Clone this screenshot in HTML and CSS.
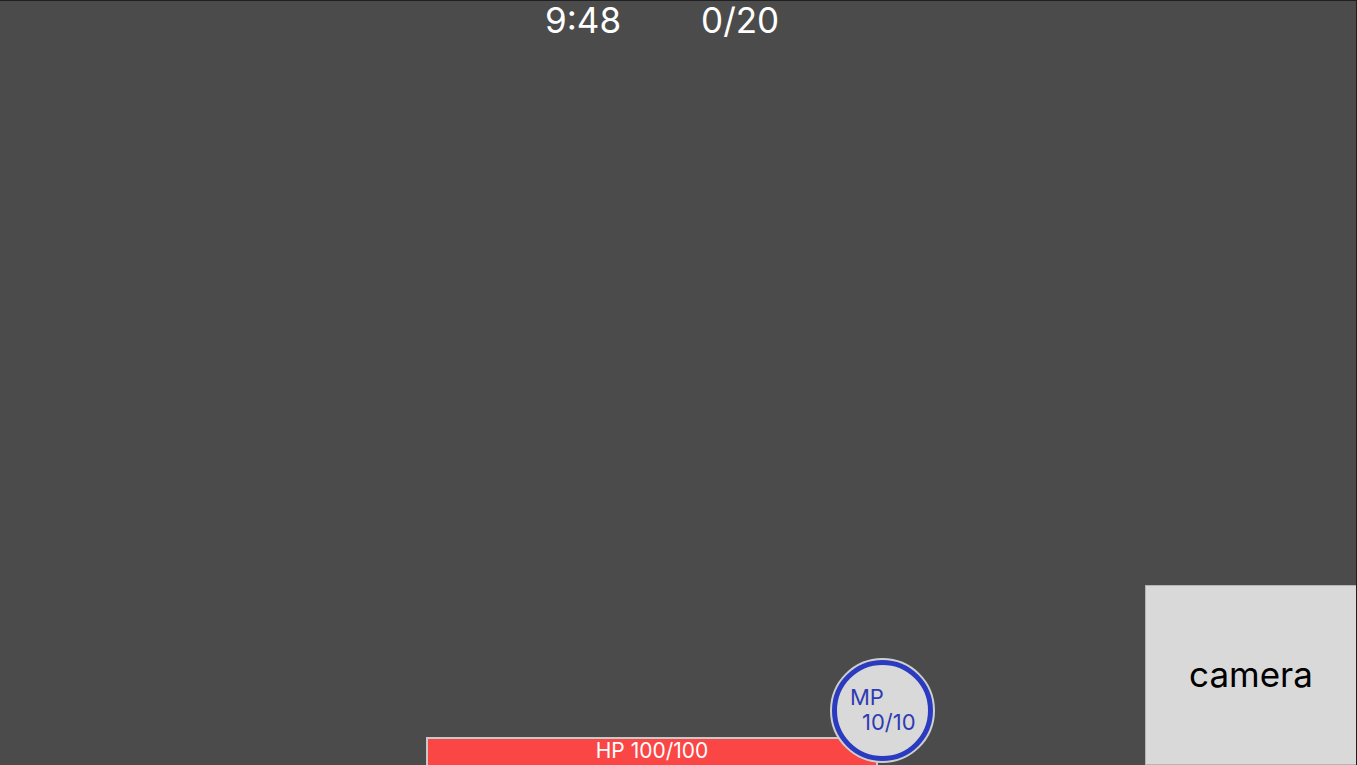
FILE: index.html
```html
<!DOCTYPE html>
<html lang="en">
<head>
<meta charset="utf-8">
<title>HUD</title>
<link rel="stylesheet" href="styles.css">
</head>
<body>
<div class="screen">
  <header class="topbar">
    <span class="stat stat-time">9:48</span>
    <span class="stat stat-count">0/20</span>
  </header>
  <main class="field"></main>
  <footer class="hud">
    <div class="vitals">
      <div class="hp-bar"><span class="hp-text">HP 100/100</span></div>
      <div class="mp-orb">
        <div class="mp-ring">
          <span class="mp-label">MP</span>
          <span class="mp-value">10/10</span>
        </div>
      </div>
    </div>
    <button class="camera-btn">camera</button>
  </footer>
</div>
</body>
</html>
```

FILE: styles.css
```css
* { box-sizing: border-box; }
html, body { margin: 0; padding: 0; }
body {
  background: #4b4b4b;
  font-family: Inter, "Noto Sans", sans-serif;
  overflow: hidden;
}
.screen {
  width: 1357px;
  height: 765px;
  border-top: 1px solid #1f1f1f;
  border-right: 1px solid #1f1f1f;
  display: flex;
  flex-direction: column;
  background: #4b4b4b;
}
.topbar {
  display: flex;
  padding-left: 545px;
  gap: 80px;
  color: #ffffff;
  font-size: 35px;
  line-height: 38px;
  height: 38px;
}
.field { flex: 1; }
.hud {
  display: flex;
  align-items: flex-end;
  height: 180px;
}
.vitals {
  display: flex;
  align-items: flex-end;
  margin-left: 426px;
}
.hp-bar {
  width: 452px;
  height: 28px;
  background: #fb4646;
  border: 2px solid #c9c9c9;
  border-bottom: none;
  display: flex;
  justify-content: center;
  align-items: center;
  color: #ffffff;
  font-size: 21px;
  line-height: 24px;
}
.hp-text { margin-top: -3px; }
.mp-orb {
  position: relative;
  z-index: 1;
  margin-left: -48px;
  margin-bottom: 2px;
  width: 105px;
  height: 105px;
  border-radius: 50%;
  border: 2px solid #cfcfcf;
  background: #d9d9d9;
}
.mp-ring {
  width: 100%;
  height: 100%;
  border-radius: 50%;
  border: 5px solid #2b3bbf;
  background: #d9d9d9;
  color: #2e3cb4;
  font-size: 22px;
  line-height: 25px;
  display: flex;
  flex-direction: column;
  padding-top: 20px;
  padding-left: 13px;
}
.mp-value { padding-left: 12px; }
.camera-btn {
  margin-left: auto;
  width: 211px;
  height: 180px;
  background: #d9d9d9;
  border: 1px solid #b4b4b4;
  border-right: none;
  font-family: Inter, "Noto Sans", sans-serif;
  font-size: 35px;
  color: #000000;
  padding: 0;
  padding-bottom: 2px;
}
```
